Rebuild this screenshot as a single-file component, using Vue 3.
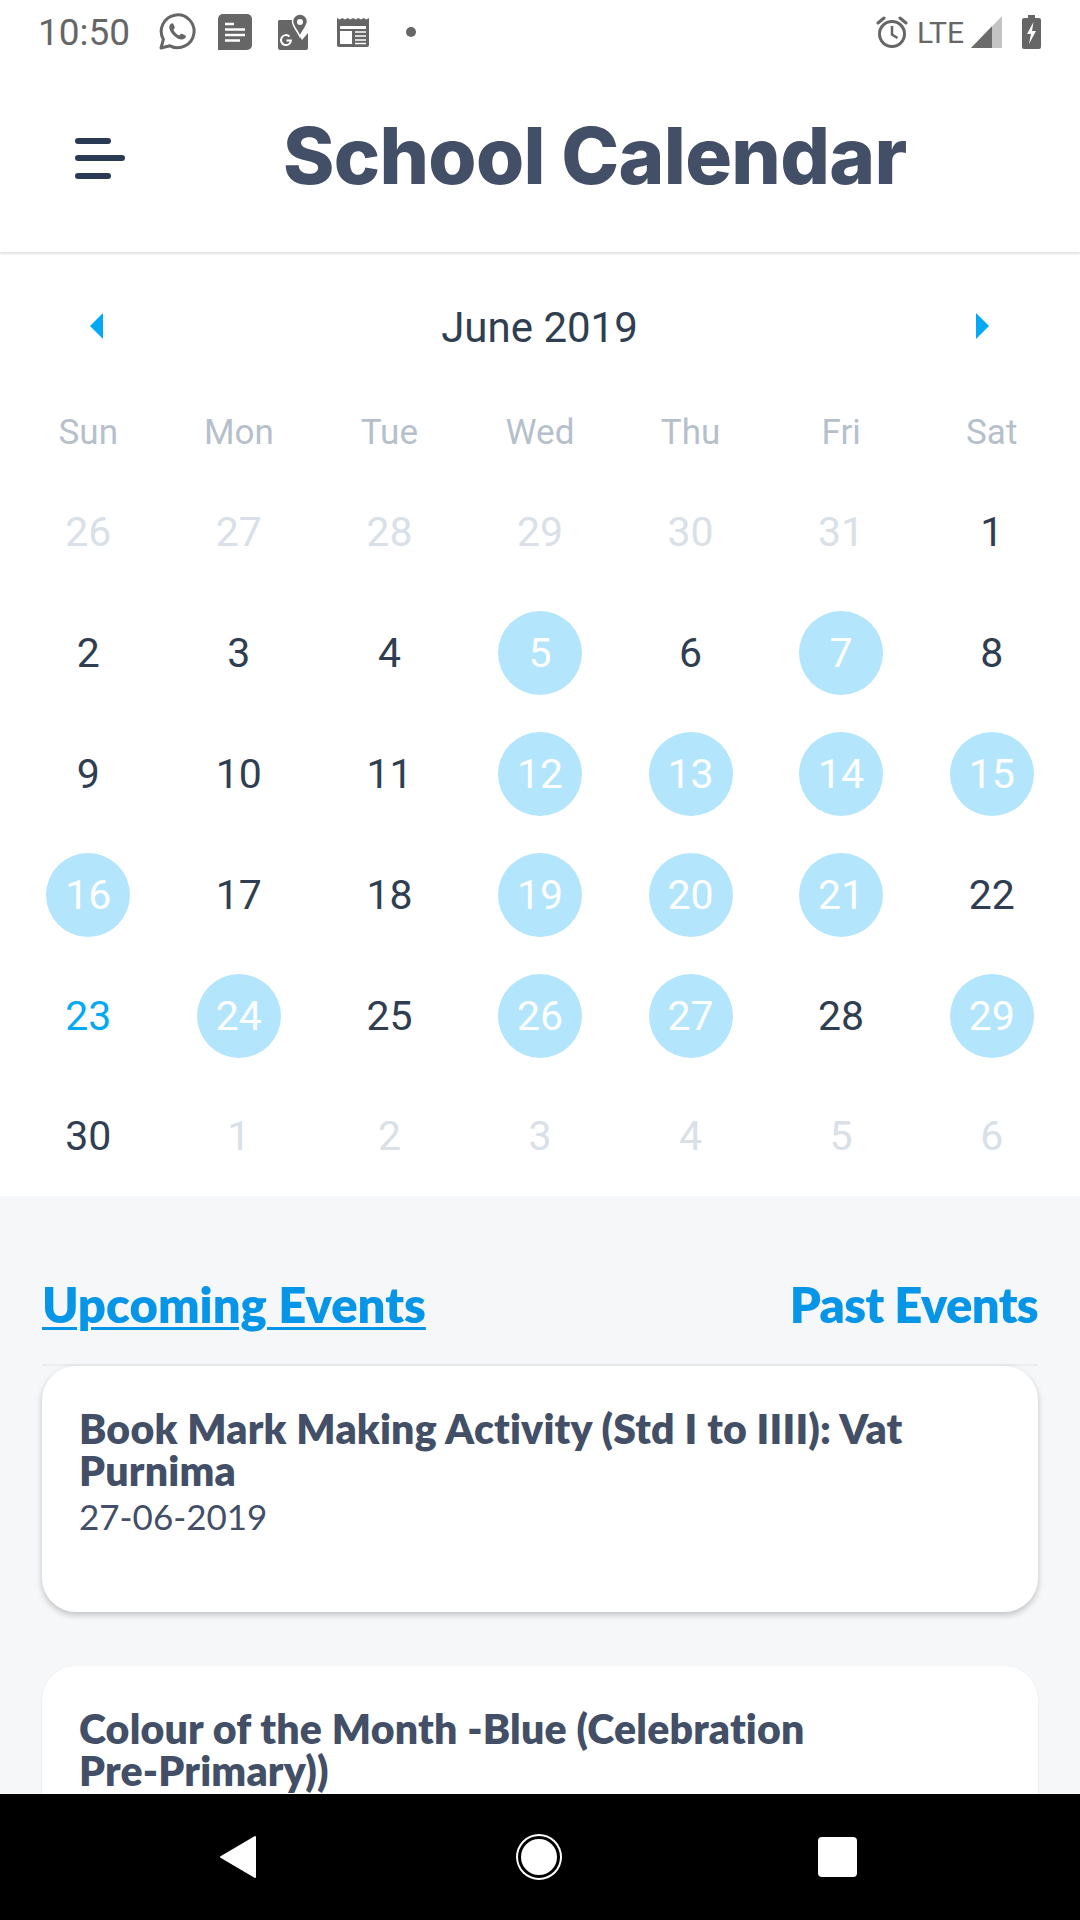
<template>
  <div class="phone">
    <div class="status-bar">
      <span class="clock">10:50</span>
      <svg class="st-icon whatsapp" viewBox="0 0 38 38" width="38" height="38">
        <path d="M3 35l2.400-8.600A16.400 16.400 0 1 1 12 32.800z" fill="none" stroke="#666" stroke-width="3" stroke-linejoin="round" />
        <path d="M13.500 10.500c-1.500.8-2.800 2.800-2 5.500 1.300 4.300 6 9 10.500 10.300 2.800.8 5-.5 5.800-2.300.3-.8-.1-1.300-.8-1.700l-3-1.500c-.7-.3-1.100-.1-1.600.5l-1 1.200c-2.500-.8-5-3.300-6-5.800l1-1.100c.5-.6.6-1 .3-1.700l-1.300-3c-.4-.8-1.200-.9-1.900-.4z" fill="#666" />
      </svg>
      <svg class="st-icon notes" viewBox="0 0 34 36" width="34" height="36">
        <path d="M5 0h24a5 5 0 0 1 5 5v26a5 5 0 0 1-5 5H0V5a5 5 0 0 1 5-5z" fill="#666" />
        <path d="M7 10h9M7 15.500h20M7 21h20M7 26.500h15" stroke="#fff" stroke-width="2.600" />
      </svg>
      <svg class="st-icon maps" viewBox="0 0 30 36" width="30" height="36">
        <path d="M1 6h17l-2 7 8 13 6-7v15a2 2 0 0 1-2 2H2a2 2 0 0 1-2-2V7z" fill="#666" />
        <path d="M22 0a7.500 7.500 0 0 1 7.500 7.500c0 4-4 8-7.500 15-3.500-7-7.500-11-7.500-15A7.500 7.500 0 0 1 22 0z" fill="#666" stroke="#fff" stroke-width="1.500" />
        <circle cx="22" cy="8" r="3" fill="#fff" />
        <path d="M11.500 22.500a5 5 0 1 0 1.500 4h-4.500" fill="none" stroke="#fff" stroke-width="2" />
      </svg>
      <svg class="st-icon paper" viewBox="0 0 32 30" width="32" height="30">
        <path d="M0 1l2.700 1.500L5.300 1 8 2.500 10.700 1l2.600 1.500L16 1l2.700 1.500L21.300 1 24 2.500 26.700 1l2.600 1.500L32 1v27a2 2 0 0 1-2 2H2a2 2 0 0 1-2-2z" fill="#666" />
        <rect x="3" y="9" width="26" height="3" fill="#fff" />
        <rect x="3" y="14" width="12" height="13" fill="#fff" />
        <path d="M18 15h11M18 19h11M18 23h11M18 26.500h11" stroke="#fff" stroke-width="1.500" />
      </svg>
      <span class="dot"></span>
      <span class="status-right">
        <svg viewBox="0 0 32 34" width="32" height="34">
          <circle cx="16" cy="19" r="12.500" fill="none" stroke="#666" stroke-width="3" />
          <path d="M16 11v8.500l5.500 3.500" fill="none" stroke="#666" stroke-width="2.500" />
          <path d="M2 8l6-5M30 8l-6-5" stroke="#666" stroke-width="3" stroke-linecap="round" />
        </svg>
        <span class="lte">LTE</span>
        <svg class="signal" viewBox="0 0 31 32" width="31" height="32">
          <path d="M0 32L31 0v32z" fill="#c4c4c4" />
          <path d="M0 32L21 10.300V32z" fill="#6b6b6b" />
        </svg>
        <svg class="battery" viewBox="0 0 19 34" width="19" height="34">
          <path d="M6 0h7v3h4a2 2 0 0 1 2 2v27a2 2 0 0 1-2 2H2a2 2 0 0 1-2-2V5a2 2 0 0 1 2-2h4z" fill="#666" />
          <path d="M11.500 7L5 19h4l-2 10 7-13h-4z" fill="#fff" />
        </svg>
      </span>
    </div>

    <header class="app-header">
      <button class="menu-btn" aria-label="Menu">
        <span class="bar short"></span>
        <span class="bar"></span>
        <span class="bar short"></span>
      </button>
      <h1>School Calendar</h1>
    </header>

    <main class="content">
      <section class="calendar">
        <div class="month-row">
          <span class="arrow left"></span>
          <span class="month">June 2019</span>
          <span class="arrow right"></span>
        </div>
        <div class="week">
          <span v-for="d in weekDays" :key="d">{{ d }}</span>
        </div>
        <div class="days">
          <div v-for="(day, i) in days" :key="i" class="day">
            <span class="num" :class="day.kind">{{ day.n }}</span>
          </div>
        </div>
      </section>

      <section class="events">
        <div class="tabs">
          <a class="tab active">Upcoming Events</a>
          <a class="tab">Past Events</a>
        </div>
        <div v-for="ev in events" :key="ev.date" class="card">
          <h3>
            <span v-for="line in ev.lines" :key="line">{{ line }}</span>
          </h3>
          <p>{{ ev.date }}</p>
        </div>
      </section>
    </main>

    <nav class="nav-bar">
      <svg viewBox="0 0 40 46" width="40" height="46">
        <path d="M37 3v40L3 23z" fill="#fff" stroke="#fff" stroke-width="2" stroke-linejoin="round" />
      </svg>
      <span class="home"></span>
      <span class="recent"></span>
    </nav>
  </div>
</template>

<script setup>
const weekDays = ['Sun', 'Mon', 'Tue', 'Wed', 'Thu', 'Fri', 'Sat'];

const marked = [5, 7, 12, 13, 14, 15, 16, 19, 20, 21, 24, 26, 27, 29];

const days = [];
[26, 27, 28, 29, 30, 31].forEach((n) => days.push({ n, kind: 'muted' }));
for (let n = 1; n <= 30; n++) {
  let kind = '';
  if (marked.includes(n)) kind = 'marked';
  if (n === 23) kind = 'today';
  days.push({ n, kind });
}
[1, 2, 3, 4, 5, 6].forEach((n) => days.push({ n, kind: 'muted' }));

const events = [
  { lines: ['Book Mark Making Activity (Std I to IIII): Vat', 'Purnima'], date: '27-06-2019' },
  { lines: ['Colour of the Month -Blue (Celebration', 'Pre-Primary))'], date: '28-06-2019' }
];
</script>

<style scoped>
.phone {
  width: 1080px;
  height: 1920px;
  display: flex;
  flex-direction: column;
  overflow: hidden;
  background: #fff;
  font-family: Roboto, sans-serif;
}

.status-bar {
  height: 64px;
  flex: none;
  display: flex;
  align-items: center;
  padding: 0 38px;
  color: #666;
}

.clock {
  font-size: 37px;
  width: 120px;
}

.st-icon {
  flex: none;
}

.notes {
  margin-left: 22px;
}

.maps {
  margin-left: 26px;
}

.paper {
  margin-left: 29px;
}

.dot {
  width: 10px;
  height: 10px;
  border-radius: 50%;
  background: #666;
  margin-left: 37px;
}

.status-right {
  margin-left: auto;
  display: flex;
  align-items: center;
}

.lte {
  font-size: 30px;
  margin-left: 9px;
  color: #666;
}

.signal {
  margin-left: 7px;
}

.battery {
  margin-left: 20px;
  margin-right: 1px;
}

.app-header {
  height: 188px;
  flex: none;
  position: relative;
  z-index: 1;
  display: flex;
  align-items: center;
  background: #fff;
  box-shadow: 0 2px 2px rgba(0, 0, 0, 0.12);
  clip-path: inset(0 0 -6px 0);
}

.menu-btn {
  width: 50px;
  margin-left: 75px;
  padding: 0;
  border: none;
  background: none;
  display: flex;
  flex-direction: column;
  gap: 11.500px;
}

.bar {
  display: block;
  width: 50px;
  height: 6px;
  border-radius: 3px;
  background: #2a3a55;
}

.bar.short {
  width: 36px;
}

.app-header h1 {
  margin: 0 0 6px 158px;
  font-family: Inter, sans-serif;
  font-weight: 800;
  font-size: 78px;
  letter-spacing: -0.7px;
  color: #424f66;
}

.content {
  flex: 1;
  min-height: 0;
  overflow: hidden;
  background: #f6f7f9;
}

.calendar {
  background: #fff;
  padding: 0 13px;
  height: 944px;
}

.month-row {
  height: 150px;
  display: flex;
  align-items: center;
  justify-content: space-between;
  padding: 0 78px 0 77px;
}

.month {
  font-size: 42px;
  color: #2f3e50;
}

.arrow {
  width: 0;
  height: 0;
  margin-top: -2px;
  border-top: 13px solid transparent;
  border-bottom: 13px solid transparent;
}

.arrow.left {
  border-right: 13px solid #03a9f4;
}

.arrow.right {
  border-left: 13px solid #03a9f4;
}

.week {
  display: grid;
  grid-template-columns: repeat(7, 1fr);
  height: 60px;
  margin-bottom: 10px;
  align-items: center;
  text-align: center;
  font-size: 35px;
  color: #b6bfcc;
}

.days {
  display: grid;
  grid-template-columns: repeat(7, 1fr);
  grid-auto-rows: 120.800px;
}

.day {
  display: flex;
  align-items: center;
  justify-content: center;
}

.num {
  width: 84px;
  height: 84px;
  border-radius: 50%;
  display: flex;
  align-items: center;
  justify-content: center;
  font-size: 41px;
  color: #2f3e50;
}

.num.muted {
  color: #d9e0e7;
}

.num.marked {
  background: #b3e5fc;
  color: #fff;
}

.num.today {
  color: #03a9f4;
}

.events {
  padding: 80px 42px 0;
}

.tabs {
  display: flex;
  justify-content: space-between;
  align-items: center;
  height: 90px;
  box-sizing: border-box;
  padding-bottom: 32px;
  border-bottom: 2px solid #ececee;
  font-family: Lato, sans-serif;
  font-weight: 800;
  font-size: 49px;
  letter-spacing: -0.65px;
  color: #0795e8;
}

.tab.active {
  letter-spacing: 0;
  text-decoration: underline;
  text-decoration-thickness: 3px;
  text-underline-offset: 4px;
}

.card {
  height: 246px;
  box-sizing: border-box;
  margin-bottom: 54px;
  padding: 42px 37px 0;
  background: #fff;
  border-radius: 34px;
  box-shadow: 0 3px 6px rgba(0, 0, 0, 0.22);
}

.card + .card {
  box-shadow: 0 1px 3px rgba(0, 0, 0, 0.08);
}

.card h3 {
  margin: 0;
  font-family: Lato, sans-serif;
  font-weight: 800;
  font-size: 41px;
  line-height: 42px;
  letter-spacing: 0.2px;
  font-variant-ligatures: none;
  color: #424f66;
}

.card h3 span {
  display: block;
  white-space: nowrap;
}

.card p {
  margin: 1px 0 0;
  font-family: Lato, sans-serif;
  font-size: 35px;
  line-height: 46px;
  color: #424f66;
}

.nav-bar {
  height: 126px;
  flex: none;
  display: flex;
  align-items: center;
  background: #000;
  padding-left: 218px;
}

.home {
  width: 36px;
  height: 36px;
  margin-left: 260px;
  background: #fff;
  border: 3px solid #000;
  border-radius: 50%;
  box-shadow: 0 0 0 2px #fff;
}

.recent {
  width: 39px;
  height: 40px;
  margin-left: 258px;
  background: #fff;
  border-radius: 4px;
}
</style>

<style>
html,
body {
  margin: 0;
  background: #fff;
}
</style>
